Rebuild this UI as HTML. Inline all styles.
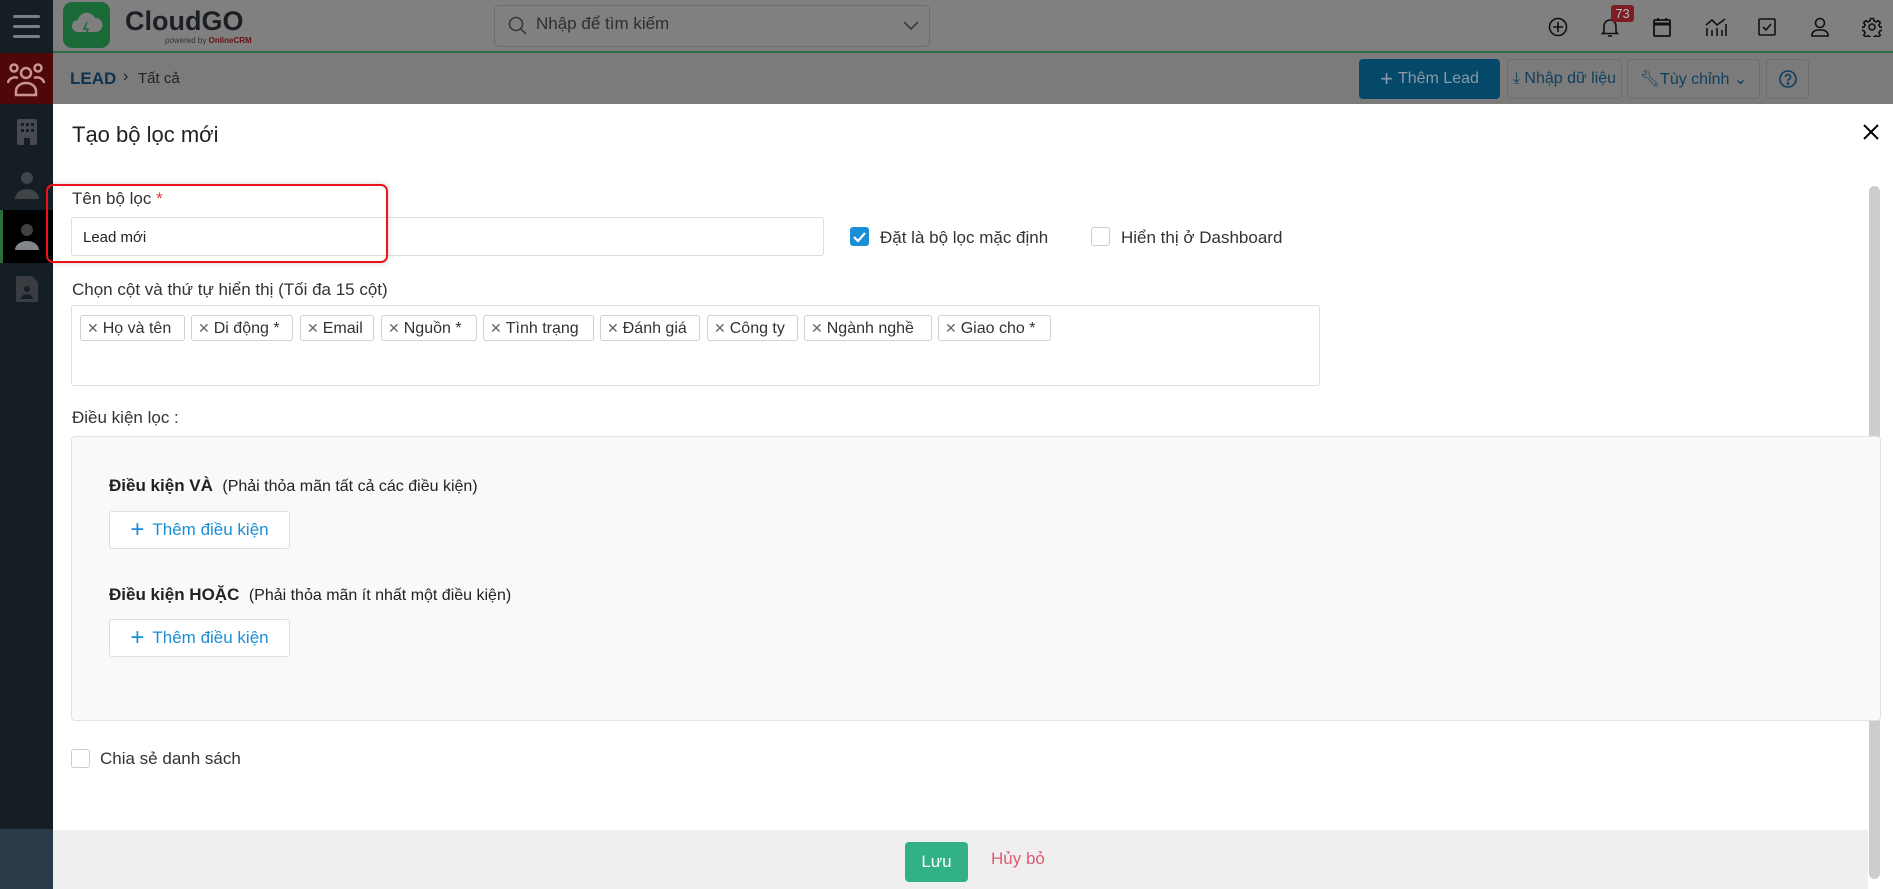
<!DOCTYPE html>
<html><head><meta charset="utf-8"><style>
*{box-sizing:border-box;margin:0;padding:0}
body{width:1893px;height:889px;overflow:hidden;position:relative;font-family:"Liberation Sans",sans-serif;background:#fff;color:#222}
.a{position:absolute}
.sb{left:0;top:0;width:53px;height:889px;background:#151d25}
.top{left:53px;top:0;width:1840px;height:53px;background:#808080;border-bottom:2px solid #2e6b45}
.bc{left:53px;top:53px;width:1840px;height:51px;background:#7b7b7b}
.btn{position:absolute;top:59px;height:40px;border:1px solid #6e6e6e;border-radius:4px;font-size:16px;color:#0e3f5e;display:flex;align-items:center;justify-content:center;gap:5px;white-space:nowrap}
.tag{position:absolute;top:315px;height:26px;border:1px solid #d0d0d0;border-radius:3px;font-size:16px;color:#333;line-height:24px;padding-left:6px;background:#fff}
.tag b{font-weight:normal;color:#666;margin-right:4px;font-size:14px}
.lbl{font-size:17px;color:#333}
.cb{position:absolute;width:19px;height:19px;border:1px solid #ccc;border-radius:3px;background:#fff}
.add{position:absolute;left:109px;width:181px;height:38px;border:1px solid #ddd;border-radius:3px;background:#fff;color:#1a8fd6;font-size:17px;display:flex;align-items:center;justify-content:center;gap:8px}
.ic{position:absolute;top:17px}
</style></head><body>
<div class="a sb"></div>
<div class="a" style="left:0;top:0;width:53px;height:53px;background:#151d25">
<div class="a" style="left:13px;top:15px;width:27px;height:3px;background:#7a7f84;border-radius:2px"></div>
<div class="a" style="left:13px;top:25px;width:27px;height:3px;background:#7a7f84;border-radius:2px"></div>
<div class="a" style="left:13px;top:35px;width:27px;height:3px;background:#7a7f84;border-radius:2px"></div></div>
<div class="a" style="left:0;top:53px;width:53px;height:51px;background:#4f0808">
<svg class="a" style="left:6px;top:8px" width="40" height="36" viewBox="0 0 40 36" fill="none" stroke="#c99393" stroke-width="2.5"><circle cx="20" cy="12" r="5"/><circle cx="8" cy="7" r="3.5"/><circle cx="32" cy="7" r="3.5"/><path d="M10 34v-4a10 8 0 0 1 20 0v4z"/><path d="M2 22a7 6 0 0 1 10-5M38 22a7 6 0 0 0-10-5"/></svg></div>
<svg class="a" style="left:12px;top:117px" width="30" height="30" viewBox="0 0 30 30"><rect x="5" y="2" width="20" height="26" rx="2" fill="#474b50"/><g fill="#151d25"><rect x="9" y="6" width="3" height="3"/><rect x="14" y="6" width="3" height="3"/><rect x="19" y="6" width="3" height="3"/><rect x="9" y="12" width="3" height="3"/><rect x="14" y="12" width="3" height="3"/><rect x="19" y="12" width="3" height="3"/><rect x="12" y="21" width="6" height="7"/></g></svg>
<svg class="a" style="left:12px;top:170px" width="30" height="30" viewBox="0 0 30 30" fill="#3f4449"><circle cx="15" cy="8" r="6"/><path d="M3 29a12 10 0 0 1 24 0z"/></svg>
<div class="a" style="left:0;top:210px;width:53px;height:53px;background:#000;border-left:3px solid #2b6e3c"></div>
<svg class="a" style="left:12px;top:222px" width="30" height="30" viewBox="0 0 30 30"><circle cx="15" cy="8" r="6" fill="#404040"/><path d="M3 28a12 9 0 0 1 24 0z" fill="#80868c"/></svg>
<svg class="a" style="left:14px;top:274px" width="26" height="30" viewBox="0 0 26 30" fill="#393d42"><path d="M2 2h16l6 6v20H2z"/><circle cx="13" cy="15" r="3" fill="#151d25"/><path d="M7 25a6 5 0 0 1 12 0z" fill="#151d25"/></svg>
<div class="a" style="left:0;top:829px;width:53px;height:60px;background:#2b3a49"></div>

<div class="a top">
<div class="a" style="left:10px;top:2px;width:47px;height:46px;background:#1a6a38;border-radius:9px"></div>
<svg class="a" style="left:17px;top:10px" width="34" height="30" viewBox="0 0 34 30"><path d="M8 22a6 6 0 0 1 0-12 9 9 0 0 1 17-2 7 7 0 0 1 1 14z" fill="#7f7f7f"/><path d="M17 12l-3 7h4l-2 7" stroke="#1a6a38" stroke-width="1.5" fill="none"/></svg>
<div class="a" style="left:72px;top:6px;font-size:27px;font-weight:bold;color:#1b1f23">CloudGO</div>
<div class="a" style="left:112px;top:36px;font-size:8px;color:#333">powered by <span style="color:#6a1010;font-weight:bold">OnlineCRM</span></div>
<div class="a" style="left:441px;top:5px;width:436px;height:42px;border:1px solid #6d6d6d;border-radius:5px"></div>
<svg class="a" style="left:455px;top:16px" width="20" height="20" viewBox="0 0 20 20" fill="none" stroke="#3a3a3a" stroke-width="1.6"><circle cx="8" cy="8" r="6.5"/><path d="M13 13l5 5"/></svg>
<div class="a" style="left:483px;top:14px;font-size:17px;color:#2e2e2e">Nhập để tìm kiếm</div>
<svg class="a" style="left:850px;top:21px" width="16" height="10" viewBox="0 0 16 10" fill="none" stroke="#3a3a3a" stroke-width="1.6"><path d="M1 1l7 7 7-7"/></svg>
<svg class="ic" style="left:1495px" width="20" height="20" viewBox="0 0 20 20" fill="none" stroke="#111" stroke-width="1.6"><circle cx="10" cy="10" r="8.5"/><path d="M10 5v10M5 10h10"/></svg>
<svg class="ic" style="left:1547px" width="20" height="20" viewBox="0 0 20 20" fill="none" stroke="#111" stroke-width="1.6"><path d="M4 15V9a6 6 0 0 1 12 0v6l1.5 1.5h-15z"/><path d="M8 19h4"/></svg>
<div class="a" style="left:1558px;top:5px;width:23px;height:17px;background:#7d1d23;border-radius:3px;color:#bbb;font-size:13px;text-align:center;line-height:17px">73</div>
<svg class="ic" style="left:1599px" width="20" height="20" viewBox="0 0 20 20" fill="none" stroke="#111" stroke-width="1.8"><rect x="2" y="3" width="16" height="16" rx="1"/><path d="M2 7h16" stroke-width="3"/><path d="M6 1v3M14 1v3"/></svg>
<svg class="ic" style="left:1652px" width="22" height="20" viewBox="0 0 22 20" fill="none" stroke="#111" stroke-width="1.6"><path d="M2 19v-8M7 19v-6M12 19v-8M17 19v-6M21 19v-12M1 8l6-5 5 5 8-6"/></svg>
<svg class="ic" style="left:1704px" width="20" height="20" viewBox="0 0 20 20" fill="none" stroke="#111" stroke-width="1.6"><rect x="2" y="2" width="16" height="16" rx="1"/><path d="M6 10l3 3 5-6"/></svg>
<svg class="ic" style="left:1757px" width="20" height="20" viewBox="0 0 20 20" fill="none" stroke="#111" stroke-width="1.6"><circle cx="10" cy="6" r="4.5"/><path d="M2 19v-1a6 5 0 0 1 6-5h4a6 5 0 0 1 6 5v1z"/></svg>
<svg class="ic" style="left:1809px" width="20" height="20" viewBox="0 0 20 20" fill="none" stroke="#111" stroke-width="1.6"><circle cx="10" cy="10" r="3"/><path d="M8.5 1.5h3l.5 2.5 2 1 2.2-1.4 2.1 2.1-1.4 2.2 1 2 2.5.5v3l-2.5.5-1 2 1.4 2.2-2.1 2.1-2.2-1.4-2 1-.5 2.5h-3l-.5-2.5-2-1-2.2 1.4-2.1-2.1 1.4-2.2-1-2-2.5-.5v-3l2.5-.5 1-2-1.4-2.2 2.1-2.1 2.2 1.4 2-1z"/></svg>
</div>

<div class="a bc">
<div class="a" style="left:17px;top:16px;font-size:17px;font-weight:bold;color:#0e3350">LEAD</div>
<div class="a" style="left:70px;top:15px;font-size:16px;color:#222">›</div>
<div class="a" style="left:85px;top:17px;font-size:15px;color:#222">Tất cả</div>
</div>
<div class="btn" style="left:1359px;width:141px;background:#04496a;border-color:#04496a;color:#8a9aa6"><span style="font-size:22px">+</span>Thêm Lead</div>
<div class="btn" style="left:1507px;width:115px">⤓ Nhập dữ liệu</div>
<div class="btn" style="left:1627px;width:133px">🔧︎Tùy chỉnh ⌄</div>
<div class="btn" style="left:1766px;width:43px"><svg width="20" height="20" viewBox="0 0 20 20" fill="none" stroke="#0e3f5e" stroke-width="1.6"><circle cx="10" cy="10" r="8"/><path d="M7.5 8a2.5 2.5 0 1 1 3.5 2.3c-.7.3-1 .8-1 1.5v.5"/><circle cx="10" cy="14.5" r=".6"/></svg></div>

<div class="a" style="left:53px;top:104px;width:1840px;height:785px;background:#fff"></div>
<div class="a" style="left:72px;top:122px;font-size:22px;color:#222">Tạo bộ lọc mới</div>
<svg class="a" style="left:1863px;top:124px" width="16" height="16" viewBox="0 0 16 16" stroke="#000" stroke-width="2"><path d="M1 1l14 14M15 1L1 15"/></svg>
<div class="a" style="left:1869px;top:186px;width:11px;height:693px;background:#cdcdcd;border-radius:6px"></div>

<div class="a lbl" style="left:72px;top:189px">Tên bộ lọc <span style="color:#e0393e">*</span></div>
<div class="a" style="left:71px;top:217px;width:753px;height:39px;border:1px solid #ddd;border-radius:3px"></div>
<div class="a" style="left:83px;top:229px;font-size:15px;color:#222">Lead mới</div>
<div class="a" style="left:46px;top:184px;width:342px;height:79px;border:2px solid #e8141a;border-radius:7px;box-shadow:0 0 6px rgba(0,0,0,.2)"></div>

<div class="cb" style="left:850px;top:227px;background:#1a8fd6;border-color:#1a8fd6"><svg width="17" height="17" viewBox="0 0 17 17" fill="none" stroke="#fff" stroke-width="2.2"><path d="M3 9l4 4 7-8"/></svg></div>
<div class="a lbl" style="left:880px;top:228px">Đặt là bộ lọc mặc định</div>
<div class="cb" style="left:1091px;top:227px"></div>
<div class="a lbl" style="left:1121px;top:228px">Hiển thị ở Dashboard</div>

<div class="a lbl" style="left:72px;top:280px">Chọn cột và thứ tự hiển thị (Tối đa 15 cột)</div>
<div class="a" style="left:71px;top:305px;width:1249px;height:81px;border:1px solid #ddd;border-radius:3px"></div>
<div class="tag" style="left:80px;width:105px"><b>✕</b>Họ và tên</div>
<div class="tag" style="left:191px;width:102px"><b>✕</b>Di động *</div>
<div class="tag" style="left:300px;width:74px"><b>✕</b>Email</div>
<div class="tag" style="left:381px;width:96px"><b>✕</b>Nguồn *</div>
<div class="tag" style="left:483px;width:111px"><b>✕</b>Tình trạng</div>
<div class="tag" style="left:600px;width:100px"><b>✕</b>Đánh giá</div>
<div class="tag" style="left:707px;width:91px"><b>✕</b>Công ty</div>
<div class="tag" style="left:804px;width:128px"><b>✕</b>Ngành nghề</div>
<div class="tag" style="left:938px;width:113px"><b>✕</b>Giao cho *</div>

<div class="a lbl" style="left:72px;top:408px">Điều kiện lọc :</div>
<div class="a" style="left:71px;top:436px;width:1810px;height:285px;background:#f9f9f9;border:1px solid #e3e3e3;border-radius:4px"></div>
<div class="a lbl" style="left:109px;top:476px;color:#222"><b>Điều kiện VÀ</b>&nbsp; <span style="font-size:16px">(Phải thỏa mãn tất cả các điều kiện)</span></div>
<div class="add" style="top:511px"><span style="font-size:24px;font-weight:300">+</span>Thêm điều kiện</div>
<div class="a lbl" style="left:109px;top:585px;color:#222"><b>Điều kiện HOẶC</b>&nbsp; <span style="font-size:16px">(Phải thỏa mãn ít nhất một điều kiện)</span></div>
<div class="add" style="top:619px"><span style="font-size:24px;font-weight:300">+</span>Thêm điều kiện</div>

<div class="cb" style="left:71px;top:749px"></div>
<div class="a lbl" style="left:100px;top:749px">Chia sẻ danh sách</div>

<div class="a" style="left:53px;top:830px;width:1815px;height:59px;background:#efefef"></div>
<div class="a" style="left:905px;top:842px;width:63px;height:40px;background:#31b184;border-radius:4px;color:#fff;font-size:17px;text-align:center;line-height:40px">Lưu</div>
<div class="a" style="left:991px;top:849px;font-size:17px;color:#e05a72">Hủy bỏ</div>
</body></html>
